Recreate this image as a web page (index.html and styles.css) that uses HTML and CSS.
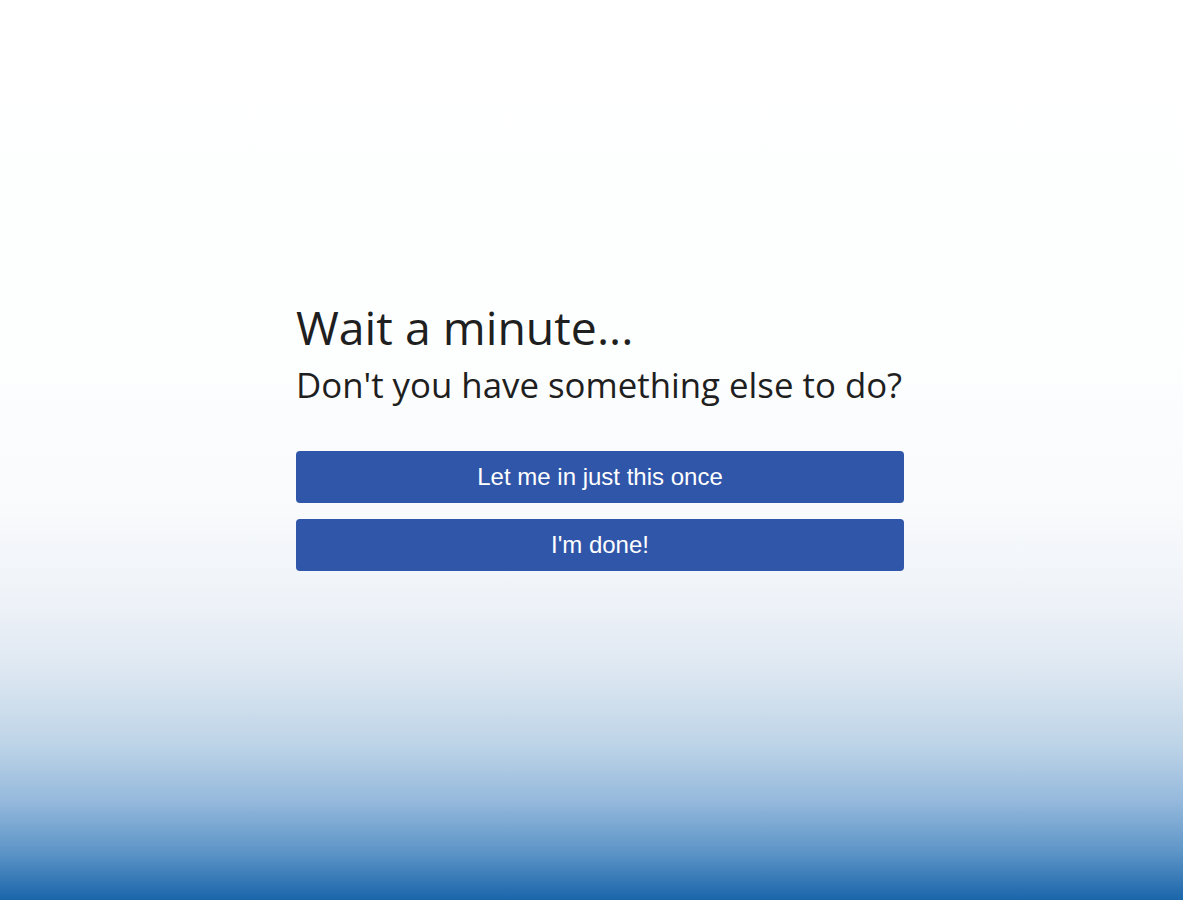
FILE: index.html
```html
<!DOCTYPE html>
<html>
<head>
<meta charset="utf-8">
<link rel="stylesheet" href="styles.css">
</head>
<body>
<main class="page">
  <section class="panel">
    <h1 class="title">Wait a minute...</h1>
    <h2 class="subtitle">Don't you have something else to do?</h2>
    <div class="actions">
      <button class="btn">Let me in just this once</button>
      <button class="btn">I'm done!</button>
    </div>
  </section>
</main>
</body>
</html>
```
FILE: styles.css
```css
html, body {
  margin: 0;
  padding: 0;
  height: 100%;
}
body {
  background: linear-gradient(to bottom,
    #ffffff 0%,
    #fdfefe 40%,
    #f8fafc 57%,
    #eef2f8 67%,
    #dfe8f2 74%,
    #d0dfed 78%,
    #bcd3e7 83%,
    #95b9dc 89%,
    #5f96c8 94.5%,
    #1a65aa 100%);
  font-family: "Open Sans", "Noto Sans", sans-serif;
  color: #1f1f1f;
}
.page {
  height: 900px;
  display: flex;
  justify-content: center;
  padding-left: 17px;
  box-sizing: border-box;
}
.panel {
  width: 608px;
  padding-top: 296px;
}
.title {
  margin: 0;
  font-size: 46.4px;
  font-weight: 400;
  line-height: 62px;
}
.subtitle {
  margin: 0;
  padding-top: 4px;
  font-size: 34.8px;
  font-weight: 400;
  line-height: 46px;
  white-space: nowrap;
}
.actions {
  margin-top: 43px;
  display: flex;
  flex-direction: column;
  gap: 16px;
}
.btn {
  height: 52px;
  border: 0;
  border-radius: 4px;
  background: #3056a9;
  color: #ffffff;
  font-family: "Liberation Sans", Arial, sans-serif;
  font-size: 24px;
  cursor: pointer;
}
```
